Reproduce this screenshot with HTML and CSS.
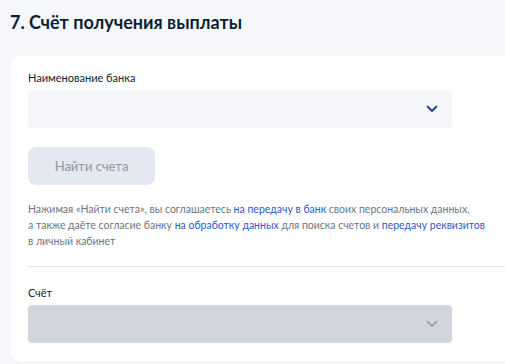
FILE: index.html
```html
<!DOCTYPE html>
<html>
<head>
<meta charset="utf-8">
<link rel="stylesheet" href="styles.css">
</head>
<body>

<h1 class="title">7. Счёт получения выплаты</h1>

<div class="card">
  <label class="label">Наименование банка</label>
  <div class="select">
    <svg class="chevron" width="12" height="8" viewBox="0 0 12 8"><path d="M1.5 1.5 L6 6 L10.5 1.5" fill="none" stroke="#233f8f" stroke-width="1.8" stroke-linecap="round" stroke-linejoin="round"/></svg>
  </div>

  <button class="button">Найти счета</button>

  <p class="note">
    Нажимая «Найти счета», вы соглашаетесь <a href="#">на передачу в банк</a> своих персональных данных,<br>
    а также даёте согласие банку <a href="#">на обработку данных</a> для поиска счетов и <a href="#">передачу реквизитов</a><br>
    в личный кабинет
  </p>

  <div class="divider"></div>

  <label class="label">Счёт</label>
  <div class="select disabled">
    <svg class="chevron" width="12" height="8" viewBox="0 0 12 8"><path d="M1.5 1.5 L6 6 L10.5 1.5" fill="none" stroke="#8c95a3" stroke-width="1.5" stroke-linecap="round" stroke-linejoin="round"/></svg>
  </div>
</div>

</body>
</html>
```

FILE: styles.css
```css
body {
  margin: 0;
  font-family: Lato, "Noto Sans", sans-serif;
  background-color: #f5f7fa;
  color: #0b1f33;
}

.title {
  margin: 0;
  padding: 10px 10px 0;
  font-size: 18px;
  line-height: 24px;
  font-weight: 700;
}

.card {
  margin: 22px 0 0 10px;
  padding: 14px 0 18px 18px;
  background-color: #fff;
  border-radius: 12px 0 0 12px;
}

.label {
  display: block;
  font-size: 11px;
  line-height: 16px;
  color: #0b1f33;
  margin-bottom: 4px;
}

.select {
  width: 424px;
  height: 38px;
  background-color: #f4f6f9;
  border-radius: 4px;
  display: flex;
  align-items: center;
  justify-content: flex-end;
  padding-right: 14px;
  box-sizing: border-box;
}

.select.disabled {
  background-color: #d1d5de;
}

.button {
  display: block;
  margin-top: 19px;
  width: 127px;
  height: 38px;
  border: none;
  border-radius: 8px;
  background-color: #e4e8f0;
  color: #8d96a4;
  font-family: inherit;
  font-size: 13px;
}

.note {
  margin: 16px 0 0;
  font-size: 10.5px;
  line-height: 16px;
  color: #6b7785;
  white-space: nowrap;
}

.note a {
  color: #2d5bc8;
  text-decoration: none;
}

.divider {
  height: 1px;
  background-color: #e1e4e9;
  margin: 17px 0 18px;
}
```
